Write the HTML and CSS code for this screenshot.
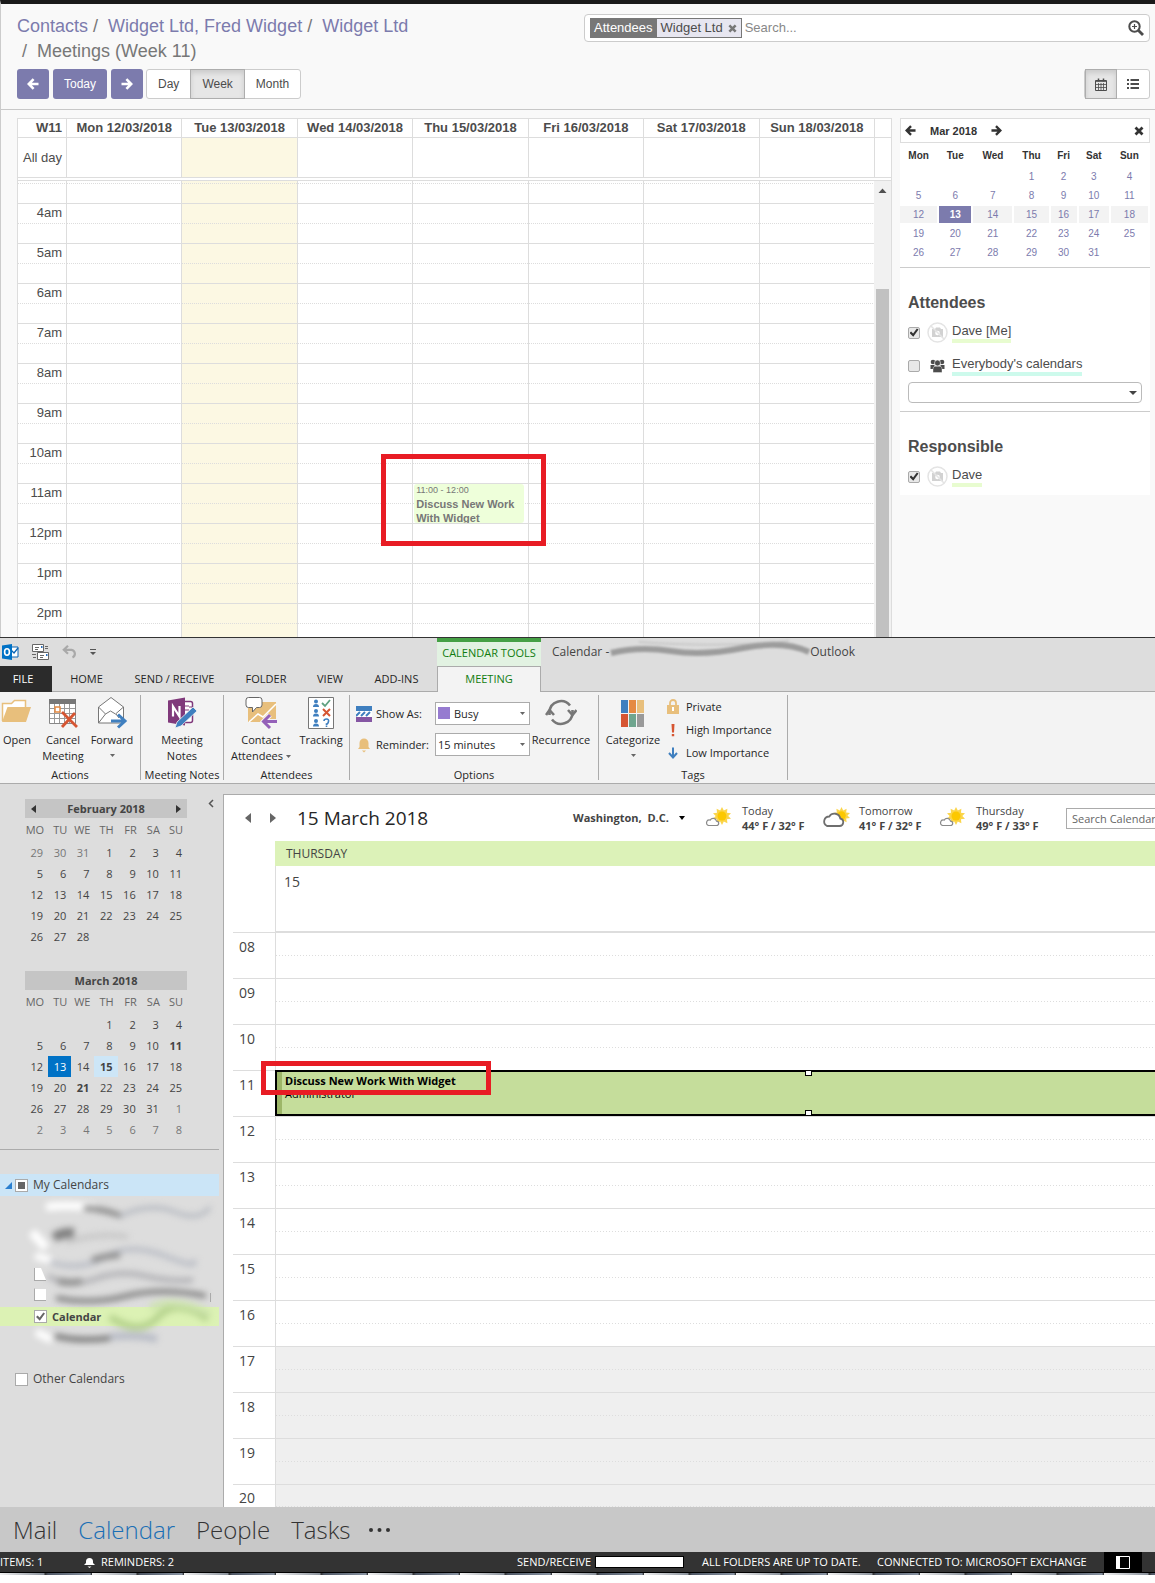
FILE: index.html
```html
<!DOCTYPE html>
<html lang="en">
<head>
<meta charset="utf-8">
<title>Meetings (Week 11)</title>
<link rel="stylesheet" href="styles.css">
</head>
<body>
<svg class="defs" aria-hidden="true">
  <symbol id="arrow-left" viewBox="0 0 12 12"><path d="M6.6 1.2 1.8 6l4.800 4.800M2.400 6H11.500" fill="none" stroke="currentColor" stroke-width="2.600"/></symbol>
  <symbol id="arrow-right" viewBox="0 0 12 12"><path d="M5.400 1.200 10.200 6l-4.800 4.800M9.600 6H.5" fill="none" stroke="currentColor" stroke-width="2.600"/></symbol>
  <symbol id="cross" viewBox="0 0 10 10"><path d="m1.500 1.500 7 7m0-7-7 7" fill="none" stroke="currentColor" stroke-width="2.800"/></symbol>
  <symbol id="no-photo" viewBox="0 0 21 21"><circle cx="10.500" cy="10.500" r="9.500" fill="#fff" stroke="#e4e4e4" stroke-width="1.500"/><path d="M5 7h3l1-1.500h4L14 7h2v8H5z" fill="#d2d2d2"/><circle cx="10.500" cy="11" r="2.300" fill="#fff"/><path d="m4 4 13 13" stroke="#e4e4e4" stroke-width="1.500"/></symbol>
  <symbol id="sun" viewBox="0 0 20 20"><path d="m10 0 2 4 4-2-.5 4.500L20 7l-3 3 3 3-4.500.5L16 18l-4-2-2 4-2-4-4 2 .5-4.500L0 13l3-3-3-3 4.500-.5L4 2l4 2z" fill="#fbd54a"/><circle cx="10" cy="10" r="5" fill="#fcc800"/></symbol>
  <symbol id="small-cloud" viewBox="0 0 26 22"><use href="#sun" x="8" y="0" width="18" height="18"/><path d="M3.500 18.500h8a2.200 2.200 0 0 0 0-4.400 3.400 3.400 0 0 0-6.300-1A2.800 2.800 0 0 0 3.500 18.500z" fill="#fff" stroke="#8a8a8a" stroke-width="1.200"/></symbol>
  <symbol id="big-cloud" viewBox="0 0 28 22"><use href="#sun" x="11" y="0" width="17" height="17"/><path d="M5 19h12.500a3.800 3.800 0 0 0 .8-7.500 6 6 0 0 0-11-2A5 5 0 0 0 5 19z" fill="#fff" stroke="#6e6e6e" stroke-width="1.800"/></symbol>
</svg>

<section class="odoo">
  <header class="panel">
    <nav class="crumbs" aria-label="Breadcrumb">
      <a href="#">Contacts</a> / &nbsp;<a href="#">Widget Ltd, Fred Widget</a> / &nbsp;<a href="#">Widget Ltd</a><br>
      <span class="crumb-last">/ &nbsp;Meetings (Week 11)</span>
    </nav>
    <div class="search">
      <span class="facet"><b>Attendees</b><span>Widget Ltd <button type="button" aria-label="Remove filter"><svg width="9" height="9"><use href="#cross"/></svg></button></span></span>
      <input type="text" placeholder="Search..." aria-label="Search">
      <button type="button" aria-label="Advanced search"><svg width="16" height="16" viewBox="0 0 16 16" fill="none" stroke="currentColor"><circle cx="6.500" cy="6.500" r="5.200" stroke-width="2"/><path d="m10.500 10.500 4.500 4.500" stroke-width="2.800"/><path d="M6.500 4v5M4 6.500h5" stroke-width="1.200"/></svg></button>
    </div>
    <div class="controls">
      <button type="button" class="primary icon-btn" aria-label="Previous"><svg width="12" height="12"><use href="#arrow-left"/></svg></button>
      <button type="button" class="primary">Today</button>
      <button type="button" class="primary icon-btn" aria-label="Next"><svg width="12" height="12"><use href="#arrow-right"/></svg></button>
      <div class="switch"><button type="button">Day</button><button type="button" class="on">Week</button><button type="button">Month</button></div>
    </div>
    <div class="switch views">
      <button type="button" class="on" aria-label="Calendar view"><svg width="12" height="13" viewBox="0 0 12 13" fill="none" stroke="currentColor"><path d="M.5 2.500h11v10H.5z"/><path d="M.5 3.500h11M.5 6.500h11M.5 9.500h11M3.500 5v7.500M6 5v7.500M8.500 5v7.500" stroke-width=".8"/><path d="M3.500.5v3M8.500.5v3" stroke-width="1.500"/></svg></button>
      <button type="button" aria-label="List view"><svg width="12" height="10" viewBox="0 0 12 10" fill="currentColor"><path d="M0 0h2v2H0zM3.500 0H12v2H3.500zM0 4h2v2H0zM3.500 4H12v2H3.500zM0 8h2v2H0zM3.500 8H12v2H3.500z"/></svg></button>
    </div>
  </header>

  <div class="odoo-body">
    <div class="week">
      <table class="week-head">
        <colgroup><col class="axis"><col span="7"><col class="bar"></colgroup>
        <tr><th>W11</th><th>Mon 12/03/2018</th><th>Tue 13/03/2018</th><th>Wed 14/03/2018</th><th>Thu 15/03/2018</th><th>Fri 16/03/2018</th><th>Sat 17/03/2018</th><th>Sun 18/03/2018</th><th></th></tr>
        <tr class="allday"><td>All day</td><td></td><td class="today"></td><td></td><td></td><td></td><td></td><td></td><td></td></tr>
      </table>
      <div class="week-scroll">
        <table class="week-grid">
          <colgroup><col class="axis"><col span="7"></colgroup>
          <tr class="first"><td></td><td></td><td class="today"></td><td></td><td></td><td></td><td></td><td></td></tr>
          <tr><td>4am</td><td></td><td class="today"></td><td></td><td></td><td></td><td></td><td></td></tr>
          <tr><td>5am</td><td></td><td class="today"></td><td></td><td></td><td></td><td></td><td></td></tr>
          <tr><td>6am</td><td></td><td class="today"></td><td></td><td></td><td></td><td></td><td></td></tr>
          <tr><td>7am</td><td></td><td class="today"></td><td></td><td></td><td></td><td></td><td></td></tr>
          <tr><td>8am</td><td></td><td class="today"></td><td></td><td></td><td></td><td></td><td></td></tr>
          <tr><td>9am</td><td></td><td class="today"></td><td></td><td></td><td></td><td></td><td></td></tr>
          <tr><td>10am</td><td></td><td class="today"></td><td></td><td></td><td></td><td></td><td></td></tr>
          <tr><td>11am</td><td></td><td class="today"></td><td></td><td class="busy"><div class="meeting"><small>11:00 - 12:00</small>Discuss New Work With Widget</div><div class="mark mark-week"></div></td><td></td><td></td><td></td></tr>
          <tr><td>12pm</td><td></td><td class="today"></td><td></td><td></td><td></td><td></td><td></td></tr>
          <tr><td>1pm</td><td></td><td class="today"></td><td></td><td></td><td></td><td></td><td></td></tr>
          <tr class="last"><td>2pm</td><td></td><td class="today"></td><td></td><td></td><td></td><td></td><td></td></tr>
        </table>
        <div class="scrollbar"><svg width="9" height="5" viewBox="0 0 9 5"><path d="M.5 5 4.500.5 8.500 5z" fill="#505050"/></svg><div class="thumb"></div></div>
      </div>
    </div>

    <aside class="side">
      <div class="side-head"><svg width="11" height="11"><use href="#arrow-left"/></svg><b>Mar 2018</b><svg width="11" height="11"><use href="#arrow-right"/></svg><button type="button" aria-label="Close"><svg width="10" height="10"><use href="#cross"/></svg></button></div>
      <div class="block picker">
        <table>
          <colgroup><col class="w37"><col class="w32"><col class="w39"><col class="w34"><col class="w26"><col class="w30"><col class="w37"></colgroup>
          <tr><th>Mon</th><th>Tue</th><th>Wed</th><th>Thu</th><th>Fri</th><th>Sat</th><th>Sun</th></tr>
          <tr><td></td><td></td><td></td><td><a href="#">1</a></td><td><a href="#">2</a></td><td><a href="#">3</a></td><td><a href="#">4</a></td></tr>
          <tr><td><a href="#">5</a></td><td><a href="#">6</a></td><td><a href="#">7</a></td><td><a href="#">8</a></td><td><a href="#">9</a></td><td><a href="#">10</a></td><td><a href="#">11</a></td></tr>
          <tr class="this-week"><td><a href="#">12</a></td><td class="day-on"><a href="#">13</a></td><td><a href="#">14</a></td><td><a href="#">15</a></td><td><a href="#">16</a></td><td><a href="#">17</a></td><td><a href="#">18</a></td></tr>
          <tr><td><a href="#">19</a></td><td><a href="#">20</a></td><td><a href="#">21</a></td><td><a href="#">22</a></td><td><a href="#">23</a></td><td><a href="#">24</a></td><td><a href="#">25</a></td></tr>
          <tr><td><a href="#">26</a></td><td><a href="#">27</a></td><td><a href="#">28</a></td><td><a href="#">29</a></td><td><a href="#">30</a></td><td><a href="#">31</a></td><td></td></tr>
        </table>
      </div>
      <div class="block filters">
        <h3>Attendees</h3>
        <label class="filter"><input type="checkbox" checked><svg width="21" height="21"><use href="#no-photo"/></svg><span>Dave [Me]</span></label>
        <label class="filter mint"><input type="checkbox"><svg width="21" height="14" viewBox="0 0 21 14" fill="#4c4c4c"><circle cx="6" cy="3" r="2.300"/><circle cx="15" cy="3" r="2.300"/><path d="M3.500 6h4v4h-4zM13.500 6h4v4h-4z"/><circle cx="10.500" cy="4" r="3" stroke="#fff" stroke-width=".6"/><path d="M6 13.500V10q0-2.500 2-2.800h5q2 .3 2 2.800v3.500z" stroke="#fff" stroke-width=".4"/></svg><span>Everybody's calendars</span></label>
        <select aria-label="Add attendee"><option></option></select>
      </div>
      <div class="filters">
        <h3>Responsible</h3>
        <label class="filter"><input type="checkbox" checked><svg width="21" height="21"><use href="#no-photo"/></svg><span>Dave</span></label>
      </div>
    </aside>
  </div>
</section>

<section class="outlook">
  <header class="titlebar">
    <div class="quick">
      <svg width="17" height="16" viewBox="0 0 17 16"><path d="M8 3h8v10H8z" fill="#fff" stroke="#0a64b4"/><path d="m9 6 3 3 4-5" fill="none" stroke="#0a64b4" stroke-width="1.300"/><path d="m0 1.500 10-1.500v16L0 14.500z" fill="#0072c6"/><ellipse cx="5" cy="8" rx="2.400" ry="3.200" fill="none" stroke="#fff" stroke-width="1.600"/></svg>
      <svg width="17" height="17" viewBox="0 0 17 17" fill="#fff" stroke="#666"><path d="M.5.500h11v7H.5zM5.500 8.500h11v7h-11z"/><path d="M3 3.500h4M3 5.500h3M8 11.500h4M8 13.500h3M13 2.500h3M13 4.500h3M0 10.500h4M1 13.500h3"/><path d="M9 3h1.500M14 11h1.500" stroke="#2a6ebb" stroke-width="2"/></svg>
      <svg width="15" height="14" viewBox="0 0 15 14" fill="none" stroke="#a9a9a9" stroke-width="2.200"><path d="M6 .8 1.800 4.800 6 8.800M2 4.800h7.500a4 4 0 0 1 1 7.600"/></svg>
      <svg width="6" height="7" viewBox="0 0 6 7"><path d="M0 0h6v1H0zM0 3h6L3 6z" fill="#555"/></svg>
    </div>
    <div class="tools">CALENDAR TOOLS</div>
    <div class="title">Calendar - <svg class="smear" width="206" height="26" viewBox="0 0 206 26"><path d="M2 14q28-7 60-2t72-3 66 4" fill="none" stroke="#8c8c8c" stroke-width="6" opacity=".8"/><path d="M30 3q80 6 150-1" fill="none" stroke="#aaa" stroke-width="2" opacity=".4"/></svg>Outlook</div>
  </header>
  <nav class="tabs" aria-label="Ribbon">
    <a class="file" href="#">FILE</a><a href="#">HOME</a><a href="#">SEND / RECEIVE</a><a href="#">FOLDER</a><a href="#">VIEW</a><a href="#">ADD-INS</a><a class="active" href="#">MEETING</a>
  </nav>
  <div class="ribbon">
    <div class="group actions">
      <div class="items">
        <button type="button"><svg width="32" height="34" viewBox="0 0 32 34"><path d="M1.500 25V7.500h9l3-3h11V12" fill="#fff" stroke="#e8bf7c" stroke-width="1.500"/><path d="M6.500 11H30l-5 15H1z" fill="#e8bf7c"/></svg>Open</button>
        <button type="button"><svg width="32" height="34" viewBox="0 0 32 34"><path d="M2.500 5.500h26v22h-26z" fill="#fff" stroke="#888"/><path d="M2 3h27v5H2z" fill="#777"/><path d="M7.500 8v19M12.500 8v19M17.500 8v19M22.500 8v19M3 12.500h25M3 17.500h25M3 22.500h25" stroke="#999"/><path d="M8 11h5v5H8z" fill="#fff" stroke="#e58a43" stroke-width="1.500"/><path d="m15 16 15 15M28 17 15 31" stroke="#d65532" stroke-width="2.800"/></svg><span>Cancel<br>Meeting</span></button>
        <button type="button"><svg width="32" height="34" viewBox="0 0 32 34"><path d="M2.500 11 15 1.500 27.500 11v16h-25z" fill="#fff" stroke="#777"/><path d="m2.500 11 7 7 5-3 5 3 8-7M2.500 27l7-9M20 18l3 4" fill="none" stroke="#777"/><path d="M15 25h14M22 18.500l7 6.500-7 6.500" fill="none" stroke="#3f7fbf" stroke-width="3"/></svg>Forward<svg class="caret" width="5" height="3" viewBox="0 0 5 3"><path d="M0 0h5L2.500 3z" fill="#666"/></svg></button>
      </div>
      <div class="group-name">Actions</div>
    </div>
    <div class="group notes">
      <div class="items">
        <button type="button"><svg width="32" height="34" viewBox="0 0 32 34"><path d="M16 5.500h8.500q2 0 2 2v17q0 2-2 2H16" fill="#fff" stroke="#80397b" stroke-width="1.500"/><path d="M23 11h4M23 16h4M18 10h5M18 14h5" stroke="#80397b"/><path d="m2 4.500 17-3v28l-17-3z" fill="#80397b"/><path d="M7 20.500V10.500l6.500 10V10" fill="none" stroke="#fff" stroke-width="2.200"/><path d="m9 32 2-6 16-15 4 4-16 15z" fill="#3f7fbf" stroke="#f3f3f3" stroke-width=".8"/></svg><span>Meeting<br>Notes</span></button>
      </div>
      <div class="group-name">Meeting Notes</div>
    </div>
    <div class="group people">
      <div class="items">
        <button type="button"><svg width="32" height="34" viewBox="0 0 32 34"><path d="M3 6h28v20H3z" fill="#e8bf7c"/><path d="m4 26 9-8 5 3L31 8" fill="none" stroke="#fff" stroke-width="1.500"/><path d="M3.500 1.500h11q2.500 0 2.500 2.500v5q0 2.500-2.500 2.500h-3l-4 4.500v-4.500h-4Q1 11.500 1 9V4q0-2.500 2.500-2.500z" fill="#fff" stroke="#666"/><path d="M31 25.500H19M25 19l-6.500 6.500L25 32" fill="none" stroke="#f3f3f3" stroke-width="5"/><path d="M32 25.500H19M25 19l-6.500 6.500L25 32" fill="none" stroke="#9460b8" stroke-width="3"/></svg>Contact<span class="with-caret">Attendees <svg class="caret" width="5" height="3" viewBox="0 0 5 3"><path d="M0 0h5L2.500 3z" fill="#666"/></svg></span></button>
        <button type="button"><svg width="32" height="34" viewBox="0 0 32 34"><path d="M3.500 1.500h25v31h-25z" fill="#fff" stroke="#777"/><g fill="#3f7fbf"><circle cx="11" cy="5.500" r="2"/><path d="M8 11q0-3 3-3t3 3z"/><circle cx="11" cy="15" r="2"/><path d="M8 20.500q0-3 3-3t3 3z"/><circle cx="11" cy="25" r="2"/><path d="M8 30.500q0-3 3-3t3 3z"/></g><path d="m17 7 3 3 5-6" fill="none" stroke="#5fa080" stroke-width="1.800"/><path d="m18 13 7 7m0-7-7 7" stroke="#d65532" stroke-width="2"/><path d="M19 25q0-2 2.500-2t2 2.500-2 2.500v1M21.500 29.500V31" fill="none" stroke="#3f7fbf" stroke-width="1.600"/></svg>Tracking</button>
      </div>
      <div class="group-name">Attendees</div>
    </div>
    <div class="group options">
      <div class="items">
        <div class="fields">
          <svg width="16" height="16" viewBox="0 0 16 16"><path d="M0 0h16v8H0z" fill="#3f7fbf"/><path d="M0 11h16v5H0z" fill="#8556a3"/><path d="M0 5h16v6H0z" fill="#fff"/><path d="m0 10 4-4M5 10l4-4M10 10l4-4" stroke="#3f7fbf" stroke-width="2"/></svg>
          <label for="show">Show As:</label>
          <div class="show"><select id="show"><option>Busy</option></select></div>
          <svg width="16" height="16" viewBox="0 0 16 16" fill="#e8bf7c"><path d="M3.500 10V6a4.500 4.500 0 0 1 9 0v4l1.500 2H2z"/><path d="M6 13.500h4L8 15.500z"/></svg>
          <label for="remind">Reminder:</label>
          <select id="remind"><option>15 minutes</option></select>
        </div>
        <button type="button"><svg width="32" height="34" viewBox="0 0 32 34" fill="none" stroke="#777" stroke-width="2.600"><path d="M4.500 19V16A11.500 11.500 0 0 1 25 9.500M27.500 14v3A11.500 11.500 0 0 1 7 23.500"/><path d="m1 19 3.500-5 4.500 5M23 14l4.500 5 4-5"/></svg>Recurrence</button>
      </div>
      <div class="group-name">Options</div>
    </div>
    <div class="group tags">
      <div class="items">
        <button type="button"><svg width="32" height="34" viewBox="0 0 32 34"><path d="M4 4h7v13H4z" fill="#3f7fbf"/><path d="M12 4h7v13h-7z" fill="#e58a43"/><path d="M20 4h7v13h-7z" fill="#e8bf7c"/><path d="M4 18h7v13H4z" fill="#d65532"/><path d="M12 18h7v13h-7z" fill="#6fa58e"/><path d="M20 18h7v13h-7z" fill="#999"/></svg>Categorize<svg class="caret" width="5" height="3" viewBox="0 0 5 3"><path d="M0 0h5L2.500 3z" fill="#666"/></svg></button>
        <div class="tag-list">
          <button type="button"><svg width="12" height="15" viewBox="0 0 12 15"><path d="M3 7V4a3 3 0 0 1 6 0v3" fill="none" stroke="#e8bf7c" stroke-width="1.800"/><path d="M0 6h12v9H0z" fill="#e8bf7c"/><path d="M5 8h2v4H5z" fill="#fff"/></svg>Private</button>
          <button type="button"><svg width="12" height="14" viewBox="0 0 12 14" fill="#d65532"><path d="M4.500 1h3L7 9.500H5zM4.800 11h2.400v2.300H4.800z"/></svg>High Importance</button>
          <button type="button"><svg width="12" height="14" viewBox="0 0 12 14" fill="none" stroke="#3f7fbf" stroke-width="2"><path d="M6 1.500V11M2 7l4 4.500L10 7"/></svg>Low Importance</button>
        </div>
      </div>
      <div class="group-name">Tags</div>
    </div>
  </div>

  <div class="workspace">
    <aside class="folders">
      <button type="button" class="collapse" aria-label="Minimize folder pane"><svg width="6" height="9" viewBox="0 0 6 9"><path d="M5 1 1.500 4.500 5 8" fill="none" stroke="#555" stroke-width="1.500"/></svg></button>
      <table class="mini">
        <caption><span><svg width="5" height="8" viewBox="0 0 5 8"><path d="M5 0v8L0 4z" fill="#333"/></svg>February 2018<svg width="5" height="8" viewBox="0 0 5 8"><path d="M0 0v8l5-4z" fill="#333"/></svg></span></caption>
        <tr><th>MO</th><th>TU</th><th>WE</th><th>TH</th><th>FR</th><th>SA</th><th>SU</th></tr>
        <tr><td class="dim">29</td><td class="dim">30</td><td class="dim">31</td><td>1</td><td>2</td><td>3</td><td>4</td></tr>
        <tr><td>5</td><td>6</td><td>7</td><td>8</td><td>9</td><td>10</td><td>11</td></tr>
        <tr><td>12</td><td>13</td><td>14</td><td>15</td><td>16</td><td>17</td><td>18</td></tr>
        <tr><td>19</td><td>20</td><td>21</td><td>22</td><td>23</td><td>24</td><td>25</td></tr>
        <tr><td>26</td><td>27</td><td>28</td><td></td><td></td><td></td><td></td></tr>
      </table>
      <table class="mini">
        <caption><span class="alone">March 2018</span></caption>
        <tr><th>MO</th><th>TU</th><th>WE</th><th>TH</th><th>FR</th><th>SA</th><th>SU</th></tr>
        <tr><td></td><td></td><td></td><td>1</td><td>2</td><td>3</td><td>4</td></tr>
        <tr><td>5</td><td>6</td><td>7</td><td>8</td><td>9</td><td>10</td><td><b>11</b></td></tr>
        <tr><td>12</td><td class="now">13</td><td>14</td><td class="shown"><b>15</b></td><td>16</td><td>17</td><td>18</td></tr>
        <tr><td>19</td><td>20</td><td><b>21</b></td><td>22</td><td>23</td><td>24</td><td>25</td></tr>
        <tr><td>26</td><td>27</td><td>28</td><td>29</td><td>30</td><td>31</td><td class="dim">1</td></tr>
        <tr><td class="dim">2</td><td class="dim">3</td><td class="dim">4</td><td class="dim">5</td><td class="dim">6</td><td class="dim">7</td><td class="dim">8</td></tr>
      </table>
      <div class="tree">
        <label class="branch open"><svg width="7" height="7" viewBox="0 0 7 7"><path d="M7 0v7H0z" fill="#2a7fcf"/></svg><input type="checkbox" class="partial">My Calendars</label>
        <div class="leaves">
          <label class="leaf"><input type="checkbox" checked>Calendar</label>
          <svg class="smudge" width="219" height="152" viewBox="0 0 219 152" fill="none">
            <g class="soft">
              <path d="M46 11q25-3 50 1" stroke="#fff" stroke-width="8"/><path d="M84 12q20 1 38 8" stroke="#808080" stroke-width="5"/><path d="M120 20q30-14 55-4t35-5" stroke="#b4b8c0" stroke-width="4"/>
              <path d="M32 36l14 16" stroke="#fff" stroke-width="9"/><path d="M54 42q8-6 20-5" stroke="#808080" stroke-width="10"/><path d="M66 46q35-10 62-5" stroke="#c6c6c6" stroke-width="5"/>
              <path d="M50 66q30 10 55-5t60-1 28 4" stroke="#bbbec6" stroke-width="5"/><path d="M92 64q12-4 28-5" stroke="#8c8c8c" stroke-width="6"/><path d="M35 60l16 4" stroke="#fff" stroke-width="7"/>
              <path d="M48 80q22 12 47 3t50-3 48 4" stroke="#b0b0b4" stroke-width="5"/><path d="M58 85q14 3 24 0" stroke="#909090" stroke-width="7"/>
              <path d="M56 102q35 7 70-2t80 0" stroke="#808080" stroke-width="5"/>
              <path d="M110 121q30 20 48 0t50 2" stroke="#b5d28d" stroke-width="7"/><path d="M150 112q25-12 60 6" stroke="#cde4ac" stroke-width="7"/>
              <path d="M36 136l16 8" stroke="#fff" stroke-width="8"/><path d="M55 140q25 6 55 2" stroke="#707070" stroke-width="5"/><path d="M110 141q25-3 47 2" stroke="#b8bcc6" stroke-width="7"/>
            </g>
            <path d="M35 72h6l5 12h-11zM35 93h11v11H35z" fill="#fff"/><path d="M34.500 84V72M34.500 104.500V92.500M34 84.500h12M34 104.500h12M210.500 97v9" stroke="#aaa"/>
          </svg>
        </div>
        <label class="branch other"><input type="checkbox">Other Calendars</label>
      </div>
    </aside>

    <main class="day">
      <div class="day-head">
        <div class="arrows"><svg width="6" height="10" viewBox="0 0 6 10"><path d="M6 0v10L0 5z" fill="#666"/></svg><svg width="6" height="10" viewBox="0 0 6 10"><path d="M0 0v10l6-5z" fill="#666"/></svg></div>
        <h1>15 March 2018</h1>
        <div class="place">Washington,&nbsp; D.C. <svg width="6" height="4" viewBox="0 0 6 4"><path d="M0 0h6L3 4z"/></svg></div>
        <div class="weather"><svg width="26" height="22"><use href="#small-cloud"/></svg><div>Today<b>44° F / 32° F</b></div></div>
        <div class="weather"><svg width="28" height="22"><use href="#big-cloud"/></svg><div>Tomorrow<b>41° F / 32° F</b></div></div>
        <div class="weather"><svg width="26" height="22"><use href="#small-cloud"/></svg><div>Thursday<b>49° F / 33° F</b></div></div>
        <input type="text" placeholder="Search Calendar" aria-label="Search Calendar">
      </div>
      <table class="agenda">
        <colgroup><col class="hour"><col></colgroup>
        <tr class="weekday"><td></td><th>THURSDAY</th></tr>
        <tr class="date"><td></td><td>15</td></tr>
        <tr><th>08</th><td></td></tr>
        <tr><th>09</th><td></td></tr>
        <tr><th>10</th><td></td></tr>
        <tr><th>11</th><td class="busy"><div class="appointment"><b>Discuss New Work With Widget</b><span>Administrator</span></div><div class="mark mark-day"></div></td></tr>
        <tr><th>12</th><td></td></tr>
        <tr><th>13</th><td></td></tr>
        <tr><th>14</th><td></td></tr>
        <tr><th>15</th><td></td></tr>
        <tr><th>16</th><td></td></tr>
        <tr class="off"><th>17</th><td></td></tr>
        <tr class="off"><th>18</th><td></td></tr>
        <tr class="off"><th>19</th><td></td></tr>
        <tr class="off end"><th>20</th><td></td></tr>
      </table>
    </main>
  </div>

  <nav class="modules" aria-label="Modules"><a href="#">Mail</a><a class="current" href="#">Calendar</a><a href="#">People</a><a href="#">Tasks</a><button type="button" aria-label="More"><svg width="21" height="4" viewBox="0 0 21 4" fill="#333"><circle cx="2" cy="2" r="2"/><circle cx="10.500" cy="2" r="2"/><circle cx="19" cy="2" r="2"/></svg></button></nav>
  <footer class="status">
    <span class="count">ITEMS: 1</span>
    <span class="reminders"><svg width="11" height="11" viewBox="0 0 11 11" fill="#fff"><path d="M2 6V4.500a3.500 3.500 0 0 1 7 0V6l2 2H0zM3.500 9.500h4L5.500 11z"/></svg>REMINDERS: 2</span>
    <span class="sync">SEND/RECEIVE<i></i></span>
    <span class="folders-state">ALL FOLDERS ARE UP TO DATE.</span>
    <span class="connection">CONNECTED TO: MICROSOFT EXCHANGE</span>
    <button type="button" aria-label="Normal view"><svg width="14" height="13" viewBox="0 0 14 13"><path d="M.5.500h13v12H.5z" fill="#000" stroke="#fff"/><path d="M0 0h4v13H0z" fill="#fff"/></svg></button>
  </footer>
  <div class="taskbar"></div>
</section>
</body>
</html>
```

FILE: styles.css
```css
* { box-sizing: border-box; }
body { margin: 0; background: #fff; color: #4c4c4c; font: 13px/18px "Liberation Sans", Arial, sans-serif; }
button { font: inherit; color: inherit; border: 0; background: none; padding: 0; margin: 0; }
a { text-decoration: none; }
svg { display: block; flex: none; }
table { border-collapse: separate; border-spacing: 0; }
th, td { padding: 0; }
.defs { position: absolute; width: 0; height: 0; }

/* Web calendar */
.odoo { background: #f9f9f9; border-top: 4px solid #1a1a1a; border-left: 1px solid #ccc; }
.panel { display: grid; grid-template-columns: 1fr 566px; column-gap: 8px; padding: 10px 5px 10px 16px; border-bottom: 1px solid #c8c8c8; row-gap: 5px; }
.crumbs { font-size: 18px; line-height: 25px; color: #777; white-space: nowrap; }
.crumbs a { color: #7c7bad; }
.crumb-last { padding-left: 5px; }
.search { display: flex; align-items: center; height: 28px; padding: 0 5px; background: #fff; border: 1px solid #ccc; border-radius: 4px; }
.facet { display: flex; height: 20px; border: 1px solid #777; background: #e7e6f0; }
.facet b { background: #777; color: #fff; font-weight: 400; padding: 0 4px 0 3px; }
.facet > span { display: flex; align-items: center; gap: 5px; padding: 0 4px; }
.facet button { color: #777; }
.search input { flex: 1; min-width: 0; border: 0; outline: 0; background: none; padding: 0 3px; font: inherit; }
.search input::placeholder { color: #888; }
.controls { display: flex; gap: 4px; font-size: 12px; }
.controls .switch { margin-left: -1px; }
.controls .switch button { padding: 0 11px; }
.primary { height: 30px; padding: 0 11px; border-radius: 3px; background: #7c7bad; color: #fff; }
.icon-btn { padding: 0 10px; }
.switch { display: flex; height: 30px; font-size: 12px; border: 1px solid #ccc; border-radius: 3px; background: #fff; }
.switch button { padding: 0 10px; }
.switch .on { background: #e6e6e6; border: 1px solid #adadad; box-shadow: inset 0 3px 5px rgba(0,0,0,.12); margin: -1px 0; padding: 0 9px; }
.views { justify-self: end; }
.odoo-body { display: flex; align-items: flex-start; gap: 8px; padding: 8px 5px 0 16px; }
.week { flex: 1; min-width: 0; background: #fff; border: 1px solid #ddd; border-bottom: 0; }
.week table { table-layout: fixed; width: 100%; }
.axis { width: 48px; }
.bar { width: 17px; }
.week-head th { height: 18px; line-height: 18px; }
.week-head th + th, .week td + td { border-left: 1px solid #ddd; }
.week-head th:first-child { text-align: right; padding-right: 4px; }
.allday td { height: 41px; border-top: 1px solid #ddd; border-bottom: 1px solid #ddd; }
.week td:first-child { text-align: right; padding-right: 4px; }
.today { background-color: #fcf8e3; }
.week-scroll { display: flex; margin-top: 2px; border-top: 1px solid #ddd; }
.week-grid { flex: 1; }
.week-grid td { height: 40px; vertical-align: top; border-top: 1px solid #ddd; background-image: repeating-linear-gradient(90deg, #ddd 0 1px, transparent 1px 2px); background-size: 100% 1px; background-position: left bottom 19px; background-repeat: no-repeat; }
.week-grid .first td { height: 22px; border-top: 0; }
.week-grid .last td { height: 34px; background-position: left bottom 13px; }
.busy { position: relative; }
.meeting { position: absolute; inset: 0 4px 0 1px; overflow: hidden; padding: 0 2px; border-radius: 3px; background: #eeffda; color: #777; font-size: 11px; font-weight: 700; line-height: 14px; }
.meeting small { display: block; font-size: 9px; font-weight: 400; line-height: 13px; }
.mark { position: absolute; border: 5px solid #e81c24; z-index: 2; }
.mark-week { left: -32px; right: -18px; top: -30px; height: 92px; }
.scrollbar { width: 17px; flex: none; display: flex; flex-direction: column; align-items: center; background: #f1f1f1; padding-top: 7px; }
.thumb { width: 13px; flex: 1; margin-top: 96px; background: #c1c1c1; }

.side { width: 250px; flex: none; background: #fff; }
.side-head { display: flex; align-items: center; gap: 14px; height: 25px; padding: 0 5px 0 4px; border: 1px solid #ddd; font-size: 11px; color: #333; }
.side-head button { margin-left: auto; }
.block { border-bottom: 1px solid #ccc; }
.picker { padding-bottom: 4px; font-size: 10px; line-height: 17px; text-align: center; }
.picker table { width: calc(100% + 2px); margin-left: -2px; table-layout: fixed; border-spacing: 2px; }
.picker th { height: 21px; color: #333; }
.picker td { height: 17px; }
.picker a { color: #7c7bad; }
.this-week td { background: #f3f3f3; }
.this-week .day-on { background: #7c7bad; font-weight: 700; }
.this-week .day-on a { color: #fff; }
.w37 { width: 37px; } .w32 { width: 32px; } .w39 { width: 39px; } .w34 { width: 34px; } .w26 { width: 26px; } .w30 { width: 30px; }
.filters { padding: 25px 8px 8px; }
h3 { margin: 0 0 9px; font-size: 16px; line-height: 20px; }
.filter { display: flex; align-items: center; gap: 7px; height: 21px; }
.filter span { margin-left: -3px; line-height: 16px; border-bottom: 4px solid #e8fcd0; }
.filter.mint { margin: 12px 0 6px; }
.mint span { border-color: #cdfaec; }
input[type=checkbox] { appearance: none; flex: none; width: 13px; height: 13px; margin: 0; border: 1px solid #aaa; background: #fff; display: grid; place-items: center; }
.filter input { width: 12px; height: 12px; border-radius: 2px; background: #e8e8e8; }
input[type=checkbox]:checked::before { content: ""; width: 9px; height: 9px; background: #333; clip-path: polygon(0 55%, 18% 38%, 40% 60%, 82% 5%, 100% 18%, 42% 98%); }
.filters select { display: block; appearance: none; width: 100%; height: 21px; border: 1px solid #bbb; border-radius: 4px; background: #fff url("data:image/svg+xml,%3Csvg xmlns='http://www.w3.org/2000/svg' width='8' height='4'%3E%3Cpath d='M0 0h8L4 4z' fill='%23444'/%3E%3C/svg%3E") no-repeat right 4px center; }

/* Desktop calendar */
.outlook { border-top: 1px solid #333; background: #ddd; color: #262626; font: 11px/16px "Open Sans", "Noto Sans", sans-serif; overflow: hidden; }
.titlebar { display: flex; height: 28px; }
.quick { width: 437px; display: flex; align-items: center; gap: 13px; padding-left: 2px; }
.tools { width: 104px; padding-top: 3px; border-top: 4px solid #45a045; background: #e2f2e2; color: #107c10; text-align: center; white-space: nowrap; }
.title { display: flex; align-items: center; padding-left: 11px; color: #444; font-size: 12px; white-space: nowrap; }
.smear { filter: blur(1px); margin-right: -5px; }
.tabs { display: grid; grid-template-columns: 52px 69px 107px 76px 52px 81px 104px; line-height: 26px; text-align: center; white-space: nowrap; height: 25px; }
.tabs a { color: #262626; }
.tabs .file { background: #2b2b2b; color: #fff; padding-right: 6px; }
.tabs .active { position: relative; height: 26px; line-height: 24px; color: #107c10; background: #f3f3f3; border: 1px solid #ababab; border-bottom: 0; }
.ribbon { display: flex; padding: 3px 0; border-top: 1px solid #ababab; border-bottom: 1px solid #ababab; background: #f3f3f3; }
.group { height: 85px; display: flex; flex-direction: column; border-right: 1px solid #ababab; flex: none; }
.items { flex: 1; display: flex; justify-content: center; align-items: flex-start; }
.group-name { text-align: center; line-height: 10px; white-space: nowrap; }
.items > button { display: flex; flex-direction: column; align-items: center; padding-top: 1px; width: 50px; white-space: nowrap; line-height: 16px; }
.items > button > svg:first-child { margin-bottom: 2px; }
.items > button > .caret { margin-top: 6px; }
.with-caret { display: flex; align-items: center; gap: 3px; }
.actions { width: 141px; }
.actions .items { justify-content: flex-start; margin-left: -6px; }
.actions .items > button { width: 46px; }
.actions .items > button:last-child { width: 52px; }
.notes { width: 83px; }
.people { width: 126px; }
.people .items { justify-content: flex-start; padding-left: 2px; }
.people .items > button:first-child { width: 70px; }
.options { width: 249px; }
.options .items { justify-content: flex-start; padding-left: 6px; }
.options .items > button { width: 62px; }
.fields { display: grid; grid-template-columns: 16px 55px 95px; column-gap: 4px; row-gap: 8px; align-items: center; padding-top: 7px; }
.fields label { white-space: nowrap; }
.fields select { appearance: none; width: 100%; height: 23px; border: 1px solid #ababab; border-radius: 0; color: #262626; font: inherit; padding: 0 2px; background: #fff url("data:image/svg+xml,%3Csvg xmlns='http://www.w3.org/2000/svg' width='5' height='3'%3E%3Cpath d='M0 0h5L2.5 3z' fill='%23666'/%3E%3C/svg%3E") no-repeat right 4px center; }
.fields > svg { justify-self: center; }
.show { position: relative; }
.show select { padding-left: 18px; display: block; }
.show::after { content: ""; position: absolute; left: 3px; top: 5px; width: 12px; height: 12px; background: #967bd0; }
.tags { width: 189px; }
.tags .items { justify-content: flex-start; }
.tags .items > button { width: 68px; }
.tag-list { display: flex; flex-direction: column; }
.tag-list button { display: flex; align-items: center; gap: 7px; height: 23px; white-space: nowrap; }

.workspace { display: flex; align-items: stretch; }
.folders { position: relative; width: 223px; flex: none; padding-top: 15px; color: #444; }
.collapse { position: absolute; left: 208px; top: 15px; }
.mini { width: 162px; margin: 0 0 24px 25px; table-layout: fixed; text-align: right; }
.mini caption { font-weight: 700; background: #c5c5c5; line-height: 19px; }
.mini caption span { display: flex; align-items: center; justify-content: space-between; padding: 0 6px; }
.mini caption .alone { justify-content: center; }
.mini th { height: 24px; padding-right: 4px; font-weight: 400; color: #666; }
.mini td { height: 21px; padding-right: 5px; }
.mini .dim { color: #777; }
.mini .now { background: #0072c6; color: #fff; }
.mini .shown { background: #cde6f7; }
.tree { margin: -15px 4px 0 0; padding-top: 24px; border-top: 1px solid #ababab; font-size: 12px; }
.branch { display: flex; align-items: center; gap: 5px; height: 22px; padding-left: 15px; }
.branch.open { padding-left: 5px; background: #cbe5f7; }
.open svg { margin-right: -2px; }
.partial::before { content: ""; width: 7px; height: 7px; background: #666; }
.leaves { position: relative; padding: 111px 0 42px; }
.leaf { display: flex; align-items: center; gap: 5px; height: 19px; padding-left: 34px; background: #dcf2b4; font-size: 11px; font-weight: 700; }
.leaf input[type=checkbox]::before { background: #666; }
.smudge { position: absolute; left: 0; top: 0; }
.soft { filter: blur(3px); }

.day { flex: 1; min-width: 0; margin-top: 10px; border-top: 1px solid #ababab; border-left: 1px solid #ababab; background: #fff; color: #444; overflow: hidden; }
.day-head { display: grid; grid-template-columns: 73px 276px minmax(134px, 1fr) repeat(3, 117px) 105px; align-items: center; height: 46px; margin-right: -8px; white-space: nowrap; }
.arrows { display: flex; gap: 19px; padding-left: 21px; }
h1 { margin: 0; font-size: 19px; line-height: 24px; font-weight: 400; color: #262626; }
.place { display: flex; align-items: center; gap: 10px; font-weight: 700; }
.weather { display: grid; grid-template-columns: 35px 1fr; align-items: center; line-height: 15px; }
.weather svg { margin-left: -2px; }
.weather b { display: block; }
.day-head input { width: 100%; height: 21px; margin-left: 8px; border: 1px solid #ababab; padding: 0 5px; font: inherit; }
.day-head input::placeholder { color: #666; }
.agenda { width: calc(100% - 9px); margin-left: 9px; table-layout: fixed; }
.hour { width: 42px; }
.agenda th { font-weight: 400; text-align: left; vertical-align: top; }
.agenda tr > :first-child { height: 46px; padding: 6px 0 0 6px; border-top: 1px solid #ddd; font-size: 14px; }
.agenda td + td { border-left: 1px solid #ddd; border-top: 1px solid #ddd; background-image: repeating-linear-gradient(90deg, #ddd 0 1px, transparent 1px 3px); background-size: 100% 1px; background-position: left bottom 22px; background-repeat: no-repeat; }
.agenda th + td { border-left: 1px solid #ddd; border-top: 1px solid #ddd; background-image: repeating-linear-gradient(90deg, #ddd 0 1px, transparent 1px 3px); background-size: 100% 1px; background-position: left bottom 22px; background-repeat: no-repeat; }
.agenda tr.weekday > * { height: 25px; padding: 0; border: 0; }
.agenda tr.weekday > th { padding-left: 11px; background: #dcf2b8; line-height: 25px; font-size: 12px; }
.agenda tr.date > * { height: 66px; border-top: 0; }
.agenda tr.date > td + td { border-bottom: 1px solid #ddd; padding: 8px; vertical-align: top; font-size: 14px; background: none; }
.agenda .off td { background-color: #efefef; }
.agenda tr.end > * { height: 23px; padding-top: 5px; line-height: 16px; background-position: left bottom; }
.appointment { position: absolute; inset: -1px -4px 0 -1px; border: 2px solid #000; background: linear-gradient(90deg, #9db668 5px, #c5dd9b 5px); padding: 1px 8px; color: #000; }
.appointment b, .appointment span { display: block; line-height: 15px; }
.appointment span { line-height: 12px; }
.appointment::before, .appointment::after { content: ""; position: absolute; left: 60%; width: 5px; height: 4px; background: #fff; border: 1px solid #000; }
.appointment::before { top: -2px; }
.appointment::after { bottom: -2px; }
.mark-day { left: -15px; top: -10px; width: 230px; height: 34px; }

.modules { display: flex; align-items: center; gap: 21px; height: 45px; padding-left: 13px; background: #c8c8c8; font-size: 24px; line-height: 45px; font-weight: 300; }
.modules a { color: #333; }
.modules .current { color: #1a6fb5; }
.modules button { margin-left: -3px; }
.status { display: flex; align-items: center; height: 20px; background: #333; color: #fff; white-space: nowrap; line-height: 20px; }
.count { width: 84px; }
.reminders { display: flex; align-items: center; gap: 6px; flex: 1; }
.sync { display: flex; align-items: center; gap: 4px; width: 185px; }
.sync i { width: 89px; height: 12px; border: 1px solid #000; background: #fff; }
.folders-state { width: 175px; }
.connection { width: 227px; }
.status button { width: 38px; height: 20px; margin-right: 13px; display: grid; place-items: center; background: #000; }
.taskbar { height: 3px; border-top: 1px solid #000; background: repeating-linear-gradient(90deg, #f0f0f0 0, #8a929c 44px, #333 45px, #4f5866 48px, #8893a2 90px, #222 92px); }
```
